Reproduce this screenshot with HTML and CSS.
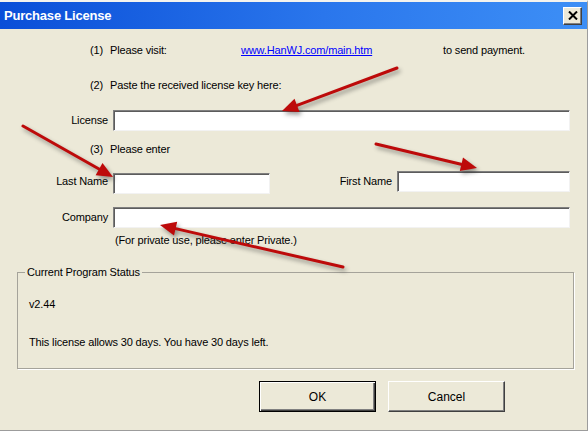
FILE: index.html
```html
<!DOCTYPE html>
<html lang="en">
<head>
    <meta charset="UTF-8">
    <title>Purchase License</title>
    <link rel="stylesheet" href="styles.css">
</head>
<body>
    <div class="window">
        <div class="titlebar">
            <span class="title">Purchase License</span>
            <button class="close" type="button">
                <svg width="10" height="9" viewBox="0 0 10 9">
                    <path d="M1 0.5 L9 8.5 M9 0.5 L1 8.5" stroke="#000" stroke-width="2" fill="none"/>
                </svg>
            </button>
        </div>

        <div class="content">
            <div class="step visit">
                <span class="num">(1)</span>
                <span class="visit-text">Please visit:</span>
                <a class="link" href="#">www.HanWJ.com/main.htm</a>
                <span>to send payment.</span>
            </div>

            <div class="step paste"><span class="num">(2)</span>Paste the received license key here:</div>

            <div class="row license-row">
                <label class="label">License</label>
                <input class="field wide" type="text">
            </div>

            <div class="step enter"><span class="num">(3)</span>Please enter</div>

            <div class="row names-row">
                <label class="label">Last Name</label>
                <input class="field last-name" type="text">
                <label class="label first-label">First Name</label>
                <input class="field first-name" type="text">
            </div>

            <div class="row company-row">
                <label class="label">Company</label>
                <input class="field wide" type="text">
            </div>

            <div class="hint">(For private use, please enter Private.)</div>

            <fieldset class="status">
                <legend>Current Program Status</legend>
                <p class="version">v2.44</p>
                <p class="days">This license allows 30 days. You have 30 days left.</p>
            </fieldset>

            <div class="buttons">
                <button class="btn default" type="button">OK</button>
                <button class="btn" type="button">Cancel</button>
            </div>
        </div>

        <!-- red callout arrows drawn over the form -->
        <svg class="arrows" width="588" height="431" viewBox="0 0 588 431">
            <g class="arrow">
                <line x1="397" y1="68" x2="297" y2="105.4"/>
                <polygon points="282,111 294.5,98.8 299.5,112"/>
            </g>
            <g class="arrow">
                <line x1="23" y1="126" x2="99" y2="169"/>
                <polygon points="113,177 95.6,175.2 102.5,163"/>
            </g>
            <g class="arrow">
                <line x1="376" y1="144" x2="461" y2="164.3"/>
                <polygon points="477,168 459.8,171.1 463,157.5"/>
            </g>
            <g class="arrow">
                <line x1="343" y1="267" x2="175.6" y2="228.6"/>
                <polygon points="160,225 177.2,221.8 174,235.4"/>
            </g>
        </svg>
    </div>
</body>
</html>
```

FILE: styles.css
```css
*, *:before, *:after {
    box-sizing: border-box;
}

:root {
    --face: #ece9d8;
    --shadow: #808080;
    --dark: #404040;
    --arrow: #bd0a0a;
}

body {
    margin: 0;
    font-family: "Liberation Sans", Arial, sans-serif;
    font-size: 11px;
    letter-spacing: -0.15px;
    color: #000;
}

.window {
    position: relative;
    width: 588px;
    height: 431px;
    background-color: var(--face);
    border-right: 1px solid #9c9c9c;
    border-bottom: 1px solid #9c9c9c;
    border-top: 2px solid #f4f3ee;
    overflow: hidden;
}

.titlebar {
    height: 27px;
    display: flex;
    align-items: center;
    justify-content: space-between;
    padding: 0 5px 0 4px;
    background: linear-gradient(90deg, #0a4fd8 0%, #2a76ec 55%, #3d8ff6 100%);
}

.title {
    color: #fff;
    font-size: 13px;
    font-weight: bold;
    letter-spacing: -0.2px;
}

.close {
    width: 19px;
    height: 18px;
    padding: 0;
    display: flex;
    align-items: center;
    justify-content: center;
    background-color: #ece9d8;
    border: 1px solid;
    border-color: #fff var(--dark) var(--dark) #fff;
    box-shadow: inset -1px -1px 0 var(--shadow);
}

.content {
    padding-top: 14px;
}

.step {
    display: flex;
    line-height: 14px;
    padding-left: 90px;
}

.num {
    width: 20px;
}

.visit-text {
    width: 131px;
}

.link {
    width: 202px;
    color: #0000ff;
    text-decoration: underline;
}

.paste {
    margin-top: 21px;
}

.enter {
    margin-top: 11px;
}

.row {
    display: flex;
    align-items: flex-start;
}

.label {
    width: 113px;
    padding-right: 5px;
    text-align: right;
    line-height: 21px;
}

.field {
    height: 21px;
    margin: 0;
    padding: 0 3px;
    background-color: #fff;
    border: 1px solid;
    border-color: #7f7f7f #f2f2f2 #f2f2f2 #7f7f7f;
    box-shadow: inset 1px 1px 0 #5c5c5c;
    font: inherit;
    outline: none;
}

.wide {
    width: 457px;
}

.license-row {
    margin-top: 18px;
}

.names-row {
    margin-top: 15px;
}

.last-name {
    width: 157px;
    margin-top: 2px;
}

.first-label {
    width: 127px;
}

.first-name {
    width: 173px;
}

.company-row {
    margin-top: 13px;
}

.hint {
    margin-top: 5px;
    padding-left: 115px;
    line-height: 14px;
}

.status {
    width: 557px;
    margin: 18px 0 0 17px;
    padding: 0 0 19px 11px;
    border: 1px solid #a5a39a;
    box-shadow: 1px 1px 0 #fff;
    min-width: 0;
}

.status legend {
    margin-left: -4px;
    padding: 0 2px;
    line-height: 14px;
}

.status p {
    margin: 0;
    line-height: 14px;
}

.version {
    margin-top: 18px !important;
}

.days {
    margin-top: 24px !important;
}

.buttons {
    display: flex;
    gap: 12px;
    margin-top: 12px;
    padding-left: 259px;
}

.btn {
    width: 117px;
    height: 31px;
    padding: 0;
    background-color: var(--face);
    border: 1px solid;
    border-color: #fff var(--dark) var(--dark) #fff;
    box-shadow: inset -1px -1px 0 var(--shadow);
    font: inherit;
    font-size: 12px;
    color: #000;
}

.btn.default {
    border: 1px solid #000;
    box-shadow: inset 1px 1px 0 #fff, inset -1px -1px 0 var(--dark), inset -2px -2px 0 var(--shadow);
}

.arrows {
    position: absolute;
    top: -2px;
    left: 0;
    pointer-events: none;
}

.arrow {
    filter: drop-shadow(2px 3px 2px rgba(40, 40, 40, 0.45));
}

.arrow line {
    stroke: var(--arrow);
    stroke-width: 3;
    stroke-linecap: round;
}

.arrow polygon {
    fill: var(--arrow);
}
```
